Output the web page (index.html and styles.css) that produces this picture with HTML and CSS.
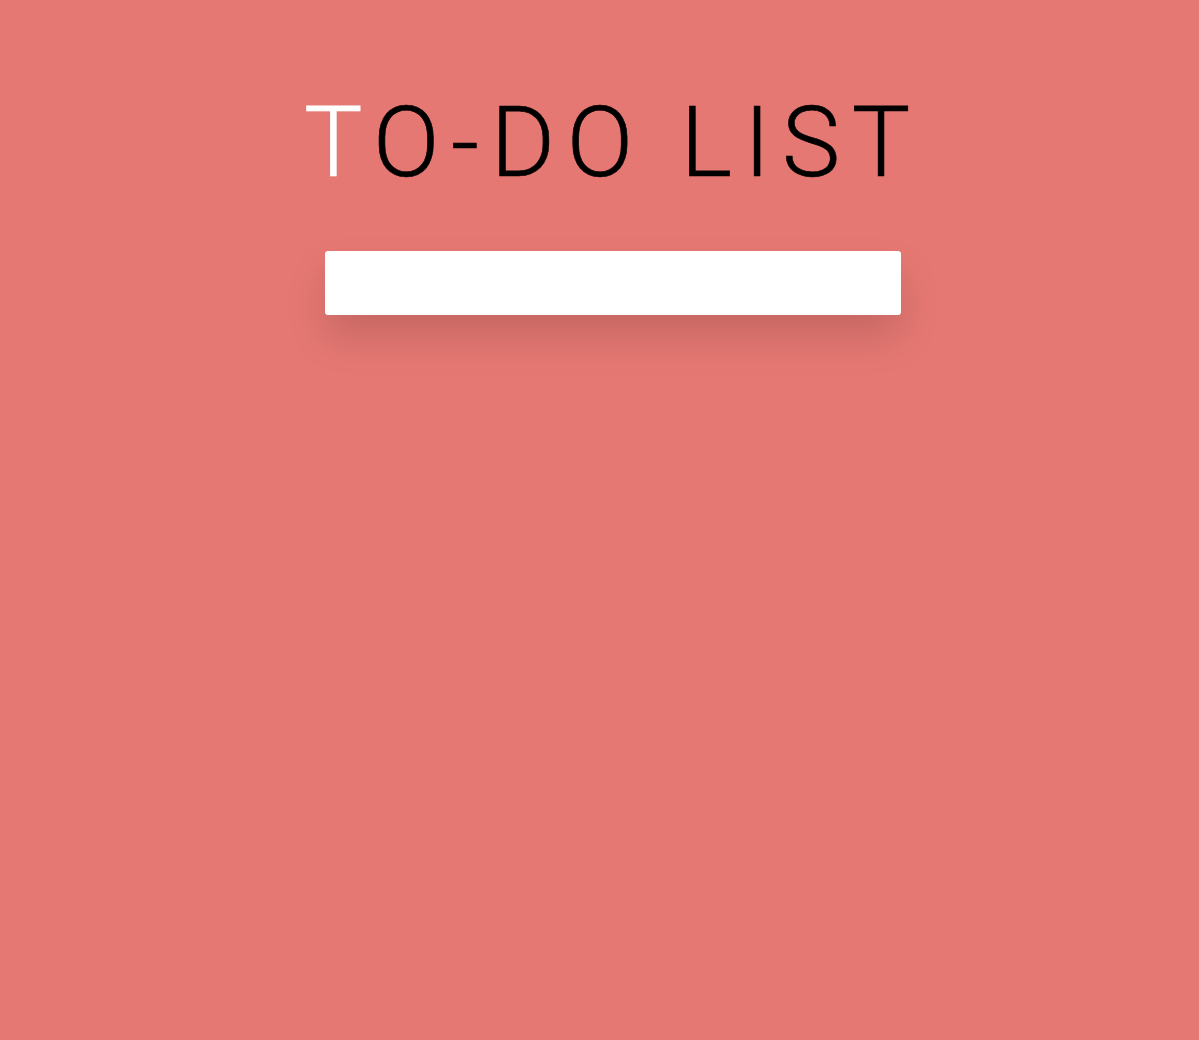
FILE: index.html
```html
<!DOCTYPE html>
<html lang="en">
<head>
<meta charset="utf-8">
<title>To-Do List</title>
<link rel="stylesheet" href="styles.css">
</head>
<body>
<main class="app">
  <h1 class="title"><span class="title-first">T</span>O-DO LIST</h1>
  <input class="new-todo" type="text" aria-label="New to-do">
</main>
</body>
</html>
```

FILE: styles.css
```css
html, body {
  margin: 0;
  padding: 0;
  height: 100%;
}
body {
  background: #e67873;
  font-family: "Roboto", "Lato", sans-serif;
}
.app {
  display: flex;
  flex-direction: column;
  align-items: center;
  padding: 94px 0 0 27px;
}
.title {
  margin: 0;
  font-weight: 300;
  font-size: 98px;
  line-height: 1;
  letter-spacing: 0.12em;
  color: #000;
  -webkit-text-stroke: 0.6px currentColor;
}
.title-first {
  color: #fff;
}
.new-todo {
  margin-top: 59px;
  width: 576px;
  height: 64px;
  box-sizing: border-box;
  border: none;
  border-radius: 3px;
  background: #fff;
  box-shadow: 0 22px 40px rgba(0, 0, 0, 0.14);
  outline: none;
  padding: 0 20px;
  font-size: 24px;
}
```
